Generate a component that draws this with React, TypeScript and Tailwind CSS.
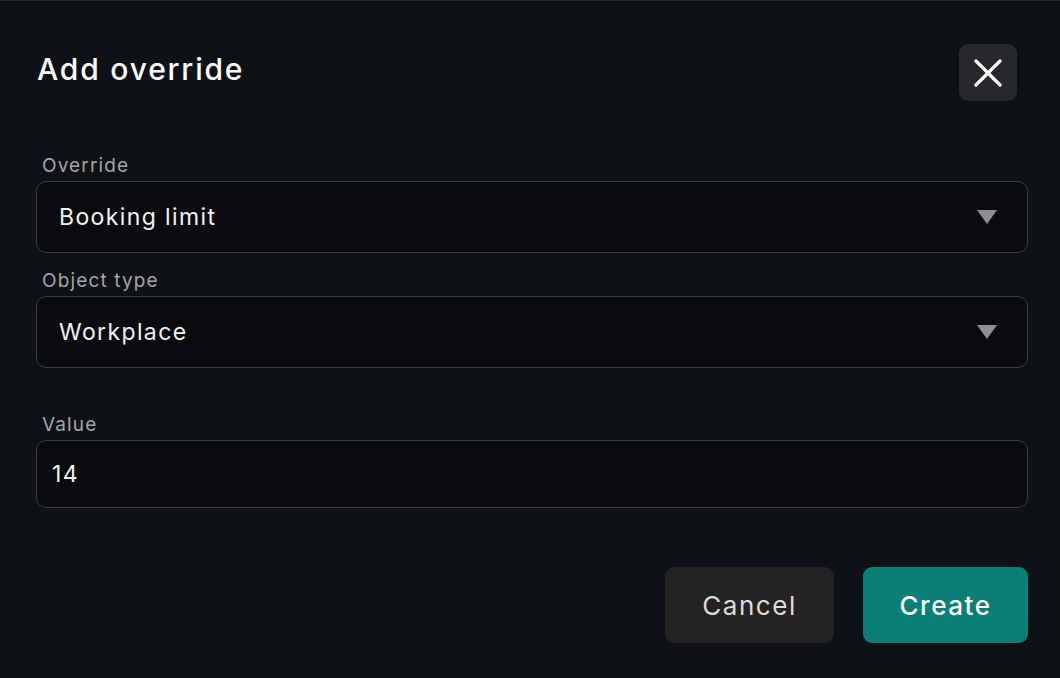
import React, { useState } from 'react';

const font = { fontFamily: '"Inter", "Noto Sans", sans-serif' };

const SelectField: React.FC<{ label: string; value: string }> = ({ label, value }) => (
  <div className="flex flex-col">
    <label className="pl-[6px] text-[19px] leading-[28px] tracking-[0.06em] text-[#a3a5a8]">{label}</label>
    <div className="mt-[1px] flex h-[72px] items-center justify-between rounded-[10px] border border-[#3b3d41] bg-[#0a0b0f] pl-[22px] pr-[30px]">
      <span className="text-[23px] tracking-[0.06em] text-[#f2f2f2]">{value}</span>
      <svg width="20" height="14" viewBox="0 0 20 14">
        <path d="M0 0 L20 0 L10 14 Z" fill="#8e8f92" />
      </svg>
    </div>
  </div>
);

export default function App() {
  const [value, setValue] = useState('14');

  return (
    <div style={font} className="h-[678px] w-[1060px] overflow-hidden border-t border-[#25282d] bg-[#0e1116] text-white">
      <div className="flex items-start justify-between pl-[37px] pr-[43px] pt-[43px]">
        <h2 className="mt-[7px] text-[30px] font-medium leading-[36px] tracking-[0.06em] text-white">Add override</h2>
        <button className="flex h-[57px] w-[58px] items-center justify-center rounded-[9px] bg-[#26282b]">
          <svg width="28" height="28" viewBox="0 0 28 28" fill="none" stroke="white" strokeWidth="3.2" strokeLinecap="round">
            <path d="M2 2 L26 26 M26 2 L2 26" />
          </svg>
        </button>
      </div>

      <div className="mt-[51px] flex flex-col gap-[14px] pl-[36px] pr-[32px]">
        <SelectField label="Override" value="Booking limit" />
        <SelectField label="Object type" value="Workplace" />

        <div className="mt-[29px] flex flex-col">
          <label className="pl-[6px] text-[19px] leading-[28px] tracking-[0.06em] text-[#a3a5a8]">Value</label>
          <input
            value={value}
            onChange={(e) => setValue(e.target.value)}
            className="mt-[1px] h-[68px] rounded-[10px] border border-[#3b3d41] bg-[#0a0b0f] px-[15px] text-[23px] tracking-[0.06em] text-[#f2f2f2] outline-none"
          />
        </div>
      </div>

      <div className="mt-[59px] flex justify-end gap-[29px] pr-[32px]">
        <button className="h-[76px] w-[169px] rounded-[9px] bg-[#232323] text-[26px] tracking-[0.06em] text-[#dcdcdc]">Cancel</button>
        <button className="h-[76px] w-[165px] rounded-[9px] bg-[#0a7f75] text-[26px] font-medium tracking-[0.06em] text-white">Create</button>
      </div>
    </div>
  );
}
